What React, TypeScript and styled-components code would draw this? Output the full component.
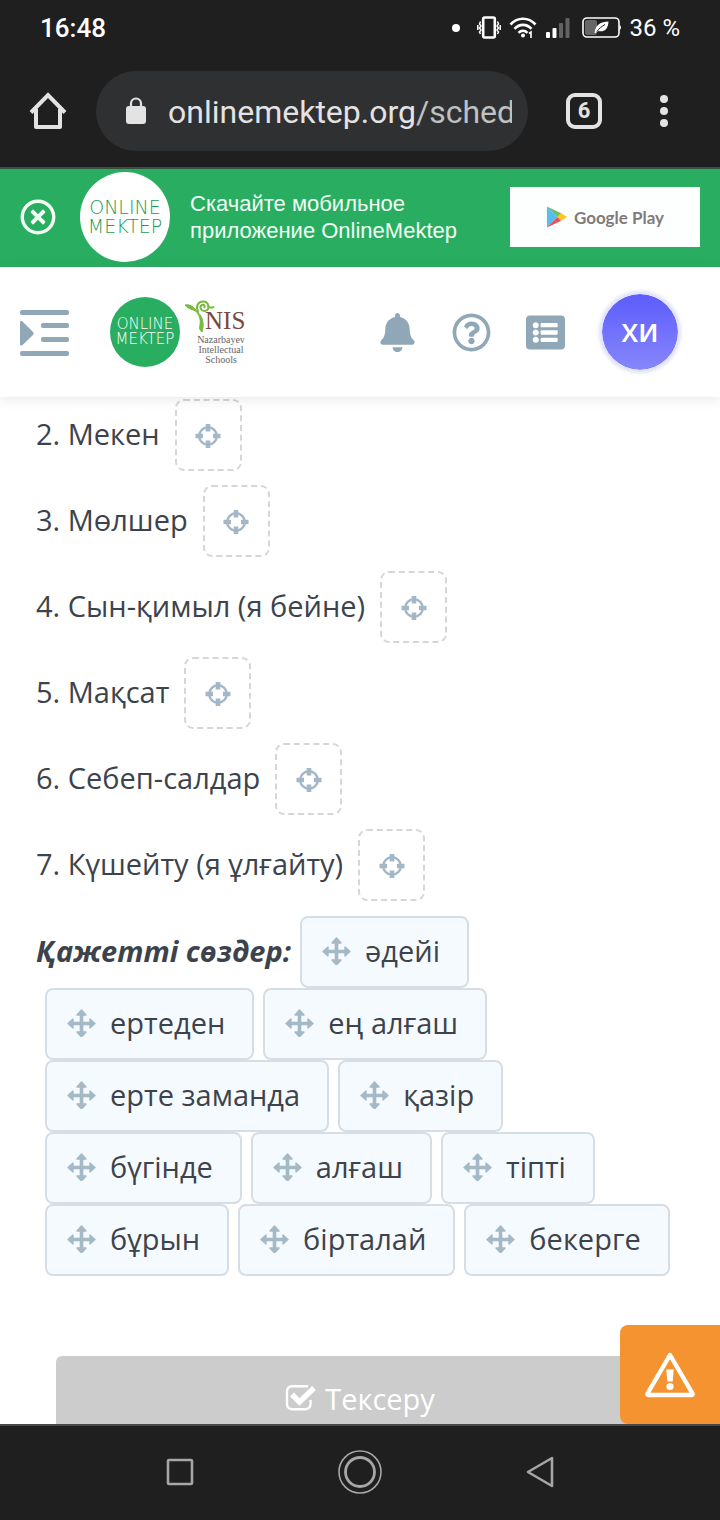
import React from 'react';
import styled, { createGlobalStyle } from 'styled-components';
import {
  FaBell,
  FaListAlt,
  FaRegQuestionCircle,
  FaRegTimesCircle,
} from 'react-icons/fa';

const GlobalStyle = createGlobalStyle`
  *, *::before, *::after { box-sizing: border-box; }
  body {
    margin: 0;
    background: #fff;
    color: #3d434c;
    font-family: "Open Sans", "Noto Sans", sans-serif;
  }
  button { font: inherit; color: inherit; border: 0; padding: 0; background: none; cursor: pointer; }
  svg { display: block; flex: none; }
`;

const Screen = styled.div`
  display: flex;
  flex-direction: column;
  height: 100vh;
  overflow: hidden;
`;

/* ---------- Phone status bar and browser toolbar ---------- */

const BrowserChrome = styled.div`
  flex: none;
  background: #1f1f1f;
  border-bottom: 2px solid #34503f;
  font-family: Roboto, sans-serif;
`;

const StatusBar = styled.div`
  display: flex;
  align-items: center;
  justify-content: space-between;
  height: 56px;
  padding: 0 40px;
  color: #fff;
`;

const Clock = styled.time`
  font-size: 26px;
  font-weight: 500;
`;

const StatusIcons = styled.div`
  display: flex;
  align-items: center;
  gap: 8px;
  font-size: 24px;
`;

const Toolbar = styled.div`
  display: flex;
  align-items: center;
  height: 111px;
  padding: 0 52px 2px 28px;
  gap: 28px;
  color: #e3e3e3;
`;

const AddressBar = styled.button`
  display: flex;
  flex: 1;
  min-width: 0;
  align-items: center;
  gap: 20px;
  height: 80px;
  padding: 0 16px 0 28px;
  border-radius: 40px;
  background: #2f3032;
`;

const Address = styled.span`
  flex: 1;
  min-width: 0;
  padding-top: 2px;
  overflow: hidden;
  white-space: nowrap;
  text-align: left;
  font-size: 32px;
  line-height: 40px;
`;

const AddressPath = styled.span`
  color: #c0c1c3;
`;

const TabCounter = styled.button`
  width: 36px;
  height: 36px;
  margin: 0 30px 0 10px;
  border: 4px solid #e3e3e3;
  border-radius: 9px;
  font-size: 22px;
  font-weight: 700;
  line-height: 28px;
`;

const IconButton = styled.button`
  display: flex;
  align-items: center;
  justify-content: center;
`;

/* ---------- App promotion banner ---------- */

const Banner = styled.aside`
  display: flex;
  flex: none;
  align-items: center;
  height: 98px;
  padding: 0 20px 2px;
  gap: 20px;
  background: #29ae61;
  color: #f1fff5;
`;

const CloseButton = styled(IconButton)`
  margin-right: 4px;
`;

const BannerText = styled.p`
  flex: 1;
  margin: 0;
  font-family: "Liberation Sans", Arial, sans-serif;
  font-size: 22px;
  line-height: 27px;
`;

const LogoDisc = styled.span<{ $small?: boolean }>`
  display: flex;
  flex: none;
  flex-direction: column;
  align-items: center;
  justify-content: center;
  width: ${(p) => (p.$small ? 70 : 90)}px;
  height: ${(p) => (p.$small ? 70 : 90)}px;
  border-radius: 50%;
  background: ${(p) => (p.$small ? '#29ae61' : '#fff')};
  color: ${(p) => (p.$small ? '#fff' : '#1d9c52')};
  font-family: "DejaVu Sans", sans-serif;
  font-size: ${(p) => (p.$small ? 15 : 19)}px;
  font-weight: 200;
  line-height: ${(p) => (p.$small ? 15 : 19)}px;
`;

const StoreLink = styled.a`
  display: flex;
  align-items: center;
  justify-content: center;
  gap: 7px;
  width: 190px;
  height: 60px;
  background: #fdfefe;
  color: #827a79;
  font-family: Lato, sans-serif;
  font-size: 17px;
  font-weight: 700;
  text-decoration: none;
`;

/* ---------- Site header ---------- */

const Header = styled.header`
  position: relative;
  z-index: 1;
  display: flex;
  flex: none;
  align-items: center;
  height: 130px;
  padding: 0 40px 0 20px;
  background: #fff;
  box-shadow: 0 2px 12px rgba(0, 0, 0, 0.1);
  color: #90a7b8;
`;

const Brand = styled.a`
  display: flex;
  align-items: center;
  gap: 5px;
  margin: 0 auto 0 41px;
  text-decoration: none;
`;

const NisLogo = styled.span`
  display: grid;
  grid-template-columns: 20px auto;
  width: 62px;
  font-family: "Liberation Serif", serif;
`;

const NisName = styled.span`
  align-self: end;
  color: #7a4a3c;
  font-size: 25px;
  line-height: 24px;
`;

const NisCaption = styled.span`
  grid-column: 1 / -1;
  padding: 2px 0 0 10px;
  color: #66666a;
  font-size: 10px;
  line-height: 10px;
  text-align: center;
`;

const HeaderActions = styled.nav`
  display: flex;
  align-items: center;
  gap: 35px;
`;

const Avatar = styled.button`
  width: 80px;
  height: 80px;
  border: 2px solid #e2e5fb;
  border-radius: 50%;
  background: linear-gradient(#5c5dfd, #8786fb) padding-box;
  box-shadow: 0 0 4px #c8ccf0;
  color: #fff;
  font-family: "Noto Sans", sans-serif;
  font-size: 26px;
  font-weight: 600;
`;

/* ---------- Exercise ---------- */

const Viewport = styled.div`
  position: relative;
  flex: 1;
  min-height: 0;
`;

const Exercise = styled.main`
  height: 100%;
  padding: 2px 36px 0;
  overflow-y: auto;
  scrollbar-width: none;
  font-size: 29px;
`;

const Questions = styled.ol`
  display: flex;
  flex-direction: column;
  gap: 14px;
  margin: 0 0 15px;
  padding: 0;
  list-style: none;
`;

const Question = styled.li`
  display: flex;
  align-items: center;
  gap: 15px;
  height: 72px;
`;

const QuestionText = styled.span`
  padding-bottom: 3px;
`;

const DropTarget = styled.button`
  display: flex;
  align-items: center;
  justify-content: center;
  width: 67px;
  height: 72px;
  border: 2px dashed #d6d6d6;
  border-radius: 9px;
`;

const WordBank = styled.div`
  display: flex;
  flex-wrap: wrap;
  align-items: center;
`;

const WordBankTitle = styled.strong`
  padding-bottom: 3px;
  font-style: italic;
  font-weight: 700;
`;

const Word = styled.button`
  display: flex;
  align-items: center;
  gap: 14px;
  height: 72px;
  margin-left: 9px;
  padding: 0 27px 3px 20px;
  border: 2px solid #d6dde4;
  border-radius: 8px;
  background: #f5fafe;
`;

const CheckButton = styled.button`
  display: flex;
  align-items: center;
  justify-content: center;
  gap: 9px;
  width: calc(100% - 40px);
  height: 88px;
  margin: 80px 20px 0;
  padding-bottom: 4px;
  border-radius: 6px;
  background: #ccc;
  color: #fff;
`;

const ReportButton = styled.button`
  position: absolute;
  right: 0;
  bottom: 0;
  display: flex;
  align-items: center;
  justify-content: center;
  width: 100px;
  height: 99px;
  border-radius: 8px 0 0 8px;
  background: #f4932f;
  color: #fff;
`;

/* ---------- Phone navigation ---------- */

const PhoneNav = styled.nav`
  display: flex;
  flex: none;
  align-items: center;
  justify-content: center;
  gap: 136px;
  height: 96px;
  padding-bottom: 2px;
  border-top: 2px solid #484845;
  background: #1f1f1f;
  color: #a6a6a6;
`;

const PhoneKey = styled(IconButton)`
  width: 44px;
  height: 44px;
`;

const VibrateIcon = () => (
  <svg width="24" height="24" viewBox="0 0 24 24" fill="none" stroke="currentColor" strokeWidth="2">
    <rect x="6.2" y="1.5" width="11.6" height="20" rx="1.5" strokeWidth="2.6" />
    <path d="M3.5 5.5 2.5 8l1.500 2-1.500 2L4 14l-1.500 2 1 2M.8 9v5M20.500 5.500 21.500 8 20 10l1.500 2-1.500 2 1.500 2-1 2M23.200 9v5" strokeWidth="1.500" />
  </svg>
);

const WifiIcon = () => (
  <svg width="28" height="24" viewBox="0 0 28 24" fill="none" stroke="currentColor" strokeWidth="2.6">
    <path d="M1.500 8.500C8.500.9 19.500.9 26.500 8.500M5.500 12.800c5-5.300 12-5.300 17 0M9.500 16.800c2.700-2.800 6.300-2.800 9 0" />
    <circle cx="14" cy="19.600" r="2" fill="currentColor" stroke="none" />
    <path d="M22 22v-6l-2 1.500" strokeWidth="1.600" />
  </svg>
);

const SignalIcon = () => (
  <svg width="28" height="22" viewBox="0 0 28 22" fill="currentColor">
    <rect x="1" y="15" width="4" height="6" rx="1" />
    <rect x="7.500" y="11" width="4" height="10" rx="1" />
    <rect x="14" y="6" width="4" height="15" rx="1" opacity=".3" />
    <rect x="20.500" y="1" width="4" height="20" rx="1" opacity=".3" />
  </svg>
);

const BatteryIcon = () => (
  <svg width="40" height="22" viewBox="0 0 40 22">
    <rect x="2" y="1" width="36" height="19" rx="4" fill="none" stroke="currentColor" strokeWidth="1.600" />
    <rect x="4" y="3" width="12" height="15" rx="2" fill="currentColor" opacity=".32" />
    <path d="M38.500 8c2 1 2 4 0 5z" fill="currentColor" />
    <path d="M13.500 16c1-8 6-11.500 14-11.500-.3 8-4.800 11-10 9.500L14.500 16z" fill="currentColor" />
    <path d="M16 14.500c2-3 4.500-5 8-7" stroke="#1f1f1f" strokeWidth="1" fill="none" />
  </svg>
);

const HomeIcon = () => (
  <svg width="40" height="40" viewBox="0 0 40 40" fill="none" stroke="currentColor" strokeWidth="4" strokeLinejoin="round">
    <path d="M3 21.500 20 4l17 17.500" strokeLinejoin="miter" />
    <path d="M8 18v18h24V18" />
  </svg>
);

const LockIcon = () => (
  <svg width="24" height="28" viewBox="0 0 24 28">
    <rect x="2" y="9" width="20" height="18" rx="3" fill="currentColor" />
    <path d="M7 10V6.500a5 5 0 0 1 10 0V10" fill="none" stroke="currentColor" strokeWidth="2.200" />
  </svg>
);

const MoreIcon = () => (
  <svg width="8" height="34" viewBox="0 0 8 34" fill="currentColor">
    <circle cx="4" cy="5" r="4" />
    <circle cx="4" cy="17" r="4" />
    <circle cx="4" cy="29" r="4" />
  </svg>
);

const PlayIcon = () => (
  <svg width="21" height="24" viewBox="0 0 22 24">
    <path d="M1 1v22l11-11z" fill="#56bdf0" />
    <path d="m1 1 11 11 4-4z" fill="#71bd6c" />
    <path d="m1 23 11-11 4 4z" fill="#e5525c" />
    <path d="m16 8 6 4-6 4-4-4z" fill="#fbc71d" />
  </svg>
);

const SidebarIcon = () => (
  <svg width="49" height="48" viewBox="0 -1 49 48" fill="currentColor">
    <rect y="1" width="49" height="5" rx="2" />
    <rect x="21" y="14" width="28" height="5" rx="2" />
    <rect x="21" y="28" width="28" height="5" rx="2" />
    <rect y="42" width="49" height="5" rx="2" />
    <path d="M0 13.500q0-3 2.500-1L13 23q1.500 1.500 0 3L2.500 36Q0 38 0 35z" />
  </svg>
);

const SproutIcon = () => (
  <svg width="30" height="33" viewBox="0 0 30 33" fill="none" stroke="#76bb3c" strokeLinecap="round">
    <path d="M11 11c6 4 9 11 6 21-2-2-3-3-2-7 1-6-1-10-4-14z" fill="#76bb3c" strokeWidth="1" />
    <path d="M0 5c4-1 9 1 12 7-4-3-8-2-12-7z" fill="#76bb3c" strokeWidth="1" />
    <path d="M13 12c-2.500-5.500 0-10.500 5-10.500 6 0 7.500 8 2 9.500-4 .6-6-4.500-3-6 2-.8 3.500 1 2.300 2.500" strokeWidth="2" />
    <path d="M23.500 6.500c2 1.500 3.500 1.500 5 .5" strokeWidth="2" />
  </svg>
);

const TargetIcon = () => (
  <svg width="26" height="26" viewBox="0 0 26 26" fill="none" stroke="#a3b7c6">
    <circle cx="13" cy="14" r="8.800" strokeWidth="2.400" />
    <path d="M13 2v7.500M13 18.500V26M.500 14H8M18 14h7.500" strokeWidth="4.600" />
  </svg>
);

const MoveIcon = () => (
  <svg width="29" height="29" viewBox="0 0 29 29" fill="#a5b8c6" stroke="#a5b8c6" strokeLinejoin="round">
    <path d="M14.500 5v21M4 15.500h21" strokeWidth="3.600" />
    <path d="m14.500 2 4.500 5H10zM14.500 29l4.500-5H10zM1 15.500l5-4.500v9zM28 15.500l-5-4.500v9z" strokeWidth="1.400" />
  </svg>
);

const CheckIcon = () => (
  <svg width="31" height="28" viewBox="0 0 31 28" fill="none" stroke="currentColor">
    <path d="M23 2.200H7A5 5 0 0 0 2 7.200v13a5 5 0 0 0 5 5h13.500a5 5 0 0 0 5-5V16" strokeWidth="2.400" />
    <path d="m7 10.500 7.500 7.500L29 4" strokeWidth="5.400" />
  </svg>
);

const WarningIcon = () => (
  <svg width="52" height="46" viewBox="0 0 52 46">
    <path d="M26 3 3.500 41.500Q3 43 4.500 43h43q1.500 0 1-1.500z" fill="none" stroke="currentColor" strokeWidth="4.400" strokeLinejoin="round" />
    <path d="M22.300 17.500h7.400l-1 12h-5.400z" fill="currentColor" />
    <circle cx="26" cy="34.500" r="3.600" fill="currentColor" />
  </svg>
);

const questions = ['2. Мекен', '3. Мөлшер', '4. Сын-қимыл (я бейне)', '5. Мақсат', '6. Себеп-салдар', '7. Күшейту (я ұлғайту)'];

const words = ['әдейі', 'ертеден', 'ең алғаш', 'ерте заманда', 'қазір', 'бүгінде', 'алғаш', 'тіпті', 'бұрын', 'бірталай', 'бекерге'];

export default function App() {
  return (
    <>
      <GlobalStyle />
      <Screen>
        <BrowserChrome>
          <StatusBar>
            <Clock>16:48</Clock>
            <StatusIcons>
              <svg width="17" height="8" viewBox="0 0 17 8"><circle cx="4" cy="4" r="4" fill="currentColor" /></svg>
              <VibrateIcon />
              <WifiIcon />
              <SignalIcon />
              <BatteryIcon />
              <span>36 %</span>
            </StatusIcons>
          </StatusBar>
          <Toolbar>
            <IconButton aria-label="Home"><HomeIcon /></IconButton>
            <AddressBar aria-label="Address">
              <LockIcon />
              <Address>onlinemektep.org<AddressPath>/sched</AddressPath></Address>
            </AddressBar>
            <TabCounter>6</TabCounter>
            <IconButton aria-label="Menu"><MoreIcon /></IconButton>
          </Toolbar>
        </BrowserChrome>

        <Banner>
          <CloseButton aria-label="Close"><FaRegTimesCircle size={36} /></CloseButton>
          <LogoDisc>
            <span>ONLINE</span>
            <span>MEKTEP</span>
          </LogoDisc>
          <BannerText>Скачайте мобильное<br />приложение OnlineMektep</BannerText>
          <StoreLink href="#"><PlayIcon />Google Play</StoreLink>
        </Banner>

        <Header>
          <IconButton aria-label="Sidebar"><SidebarIcon /></IconButton>
          <Brand href="#">
            <LogoDisc $small>
              <span>ONLINE</span>
              <span>MEKTEP</span>
            </LogoDisc>
            <NisLogo>
              <SproutIcon />
              <NisName>NIS</NisName>
              <NisCaption>Nazarbayev<br />Intellectual<br />Schools</NisCaption>
            </NisLogo>
          </Brand>
          <HeaderActions>
            <IconButton aria-label="Notifications"><FaBell size={39} /></IconButton>
            <IconButton aria-label="Help"><FaRegQuestionCircle size={39} /></IconButton>
            <IconButton aria-label="List"><FaListAlt size={39} /></IconButton>
            <Avatar>ХИ</Avatar>
          </HeaderActions>
        </Header>

        <Viewport>
          <Exercise>
            <Questions>
              {questions.map((text) => (
                <Question key={text}>
                  <QuestionText>{text}</QuestionText>
                  <DropTarget aria-label={text}><TargetIcon /></DropTarget>
                </Question>
              ))}
            </Questions>
            <WordBank>
              <WordBankTitle>Қажетті сөздер:</WordBankTitle>
              {words.map((word) => (
                <Word key={word}><MoveIcon />{word}</Word>
              ))}
            </WordBank>
            <CheckButton><CheckIcon />Тексеру</CheckButton>
          </Exercise>
          <ReportButton aria-label="Report"><WarningIcon /></ReportButton>
        </Viewport>

        <PhoneNav>
          <PhoneKey aria-label="Recent apps">
            <svg width="28" height="28" viewBox="0 0 28 28" fill="none" stroke="currentColor" strokeWidth="2.600">
              <rect x="2" y="2" width="24" height="24" rx="1" />
            </svg>
          </PhoneKey>
          <PhoneKey aria-label="Phone home">
            <svg width="44" height="44" viewBox="0 0 44 44" fill="none" stroke="currentColor">
              <circle cx="22" cy="22" r="21" strokeWidth="1.600" />
              <circle cx="22" cy="22" r="14.500" strokeWidth="2.800" />
            </svg>
          </PhoneKey>
          <PhoneKey aria-label="Back">
            <svg width="28" height="32" viewBox="0 0 28 32" fill="none" stroke="currentColor" strokeWidth="2.600" strokeLinejoin="round">
              <path d="M26 2v28L2 16z" />
            </svg>
          </PhoneKey>
        </PhoneNav>
      </Screen>
    </>
  );
}
